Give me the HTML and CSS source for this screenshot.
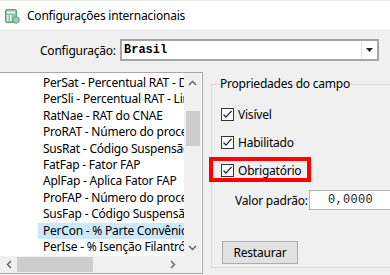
FILE: index.html
```html
<!DOCTYPE html>
<html lang="pt">
<head>
    <meta charset="UTF-8">
    <title>Configurações internacionais</title>
    <link rel="stylesheet" href="styles.css">
</head>
<body>
<div id="window">
    <div id="titlebar">
        <svg class="app-icon" width="15" height="15" viewBox="0 0 15 15">
            <rect x="0.5" y="0.5" width="11" height="13" rx="1.5" fill="#8cc4a8" stroke="#5e9e80"/>
            <rect x="2" y="2.5" width="8" height="2" fill="#e8f4ee"/>
            <rect x="2" y="6" width="1.5" height="6" fill="#e8f4ee"/>
            <rect x="5" y="6" width="1.5" height="6" fill="#e8f4ee"/>
            <circle cx="11" cy="11" r="3.3" fill="#9ccdb4" stroke="#5e9e80"/>
        </svg>
        <span>Configurações internacionais</span>
    </div>

    <div class="config-row">
        <label>Configuração:</label>
        <div class="combo">
            <span class="combo-value">Brasil</span>
            <span class="combo-btn"><svg width="7" height="4" viewBox="0 0 7 4"><path d="M0 0h7L3.5 4z" fill="#222"/></svg></span>
        </div>
    </div>

    <div id="content">
        <div class="listbox">
            <div class="items">
                <div class="item">PerSat - Percentual RAT - Dif</div>
                <div class="item">PerSli - Percentual RAT - Limite</div>
                <div class="item">RatNae - RAT do CNAE</div>
                <div class="item">ProRAT - Número do processo</div>
                <div class="item">SusRat - Código Suspensão</div>
                <div class="item">FatFap - Fator FAP</div>
                <div class="item">AplFap - Aplica Fator FAP</div>
                <div class="item">ProFAP - Número do processo</div>
                <div class="item">SusFap - Código Suspensão</div>
                <div class="item selected">PerCon - % Parte Convênio</div>
                <div class="item">PerIse - % Isenção Filantrópica</div>
            </div>
            <div class="vscroll">
                <svg width="9" height="6" viewBox="0 0 9 6"><path d="M1 5L4.5 1.5L8 5" fill="none" stroke="#606060" stroke-width="1.4"/></svg>
                <div class="vthumb-track"><div class="vthumb"></div></div>
                <svg width="9" height="6" viewBox="0 0 9 6"><path d="M1 1L4.5 4.5L8 1" fill="none" stroke="#606060" stroke-width="1.4"/></svg>
            </div>
            <div class="hscroll">
                <svg width="6" height="9" viewBox="0 0 6 9"><path d="M5 1L1.5 4.5L5 8" fill="none" stroke="#606060" stroke-width="1.4"/></svg>
                <div class="hthumb-track"><div class="hthumb"></div></div>
                <svg width="6" height="9" viewBox="0 0 6 9"><path d="M1 1L4.5 4.5L1 8" fill="none" stroke="#606060" stroke-width="1.4"/></svg>
            </div>
            <div class="corner"></div>
        </div>

        <fieldset class="group">
            <legend>Propriedades do campo</legend>
            <div class="check-row">
                <span class="checkbox"><svg width="11" height="11" viewBox="0 0 11 11"><path d="M1.5 5.5L4 8.2L9.5 2" fill="none" stroke="#222" stroke-width="1.2"/></svg></span>
                <span>Visível</span>
            </div>
            <div class="check-row">
                <span class="checkbox"><svg width="11" height="11" viewBox="0 0 11 11"><path d="M1.5 5.5L4 8.2L9.5 2" fill="none" stroke="#222" stroke-width="1.2"/></svg></span>
                <span>Habilitado</span>
            </div>
            <div class="check-row">
                <span class="checkbox"><svg width="11" height="11" viewBox="0 0 11 11"><path d="M1.5 5.5L4 8.2L9.5 2" fill="none" stroke="#222" stroke-width="1.2"/></svg></span>
                <span>Obrigatório</span>
            </div>
            <div class="value-row">
                <span class="value-label">Valor padrão:</span>
                <div class="edit">0,0000</div>
            </div>
            <button class="btn">Restaurar</button>
            <div class="highlight"></div>
        </fieldset>
    </div>
</div>
</body>
</html>
```

FILE: styles.css
```css
html, body {
    margin: 0;
    padding: 0;
}
body {
    width: 390px;
    height: 275px;
    overflow: hidden;
    background-color: #f0f0f0;
    font-family: "Noto Sans", "Open Sans", sans-serif;
    font-size: 12px;
    letter-spacing: -0.22px;
    color: #000;
}
#window {
    width: 390px;
    height: 275px;
    overflow: hidden;
}
#titlebar {
    height: 29px;
    background-color: #fff;
    display: flex;
    align-items: center;
    padding-left: 5px;
    gap: 7px;
    border-top: 1px solid #e6eedf;
    box-sizing: border-box;
}
#titlebar .app-icon {
    margin-top: 2px;
}
.config-row {
    display: grid;
    grid-template-columns: 80px 259px;
    align-items: center;
    padding-left: 40px;
    margin-top: 10px;
    white-space: nowrap;
}
.combo {
    height: 22px;
    box-sizing: border-box;
    border: 2px solid #a5a5a5;
    background-color: #fff;
    display: flex;
    align-items: center;
}
.combo-value {
    flex: 1;
    padding-left: 2px;
    font-family: "Liberation Mono", monospace;
    font-weight: bold;
    font-size: 12px;
    letter-spacing: 0;
}
.combo-btn {
    width: 15px;
    height: 18px;
    border-left: 1px solid #e3e3e3;
    display: flex;
    align-items: center;
    justify-content: center;
}
#content {
    display: flex;
    margin-top: 11px;
}
.listbox {
    width: 204px;
    height: 202px;
    margin-left: -1px;
    box-sizing: border-box;
    border: 1px solid #a8a8a8;
    background-color: #fff;
    display: grid;
    grid-template-columns: 184px 17px;
    grid-template-rows: 183px 17px;
    flex-shrink: 0;
}
.items {
    padding-top: 2px;
    overflow: hidden;
}
.item {
    height: 16.4px;
    line-height: 16px;
    margin-left: 38px;
    padding-left: 5px;
    white-space: nowrap;
    overflow: hidden;
}
.item.selected {
    background-color: #cce8ff;
}
.vscroll {
    background-color: #f0f0f0;
    display: flex;
    flex-direction: column;
    align-items: center;
    padding: 7px 0 5px;
    box-sizing: border-box;
}
.vthumb-track {
    flex: 1;
    width: 100%;
    padding-top: 25px;
}
.vthumb {
    width: 14px;
    height: 35px;
    margin: 0 auto;
    background-color: #cdcdcd;
}
.hscroll {
    background-color: #f0f0f0;
    display: flex;
    align-items: center;
    padding: 0 8px 0 6px;
}
.hthumb-track {
    flex: 1;
    height: 100%;
    display: flex;
    align-items: center;
    padding-left: 5px;
}
.hthumb {
    width: 76px;
    height: 15px;
    background-color: #cdcdcd;
}
.corner {
    background-color: #f0f0f0;
}
.group {
    position: relative;
    margin: 4px -30px 6px 8px;
    padding: 8px 0 0 9px;
    border: 1px solid #dcdcdc;
    flex: 1;
    min-width: 0;
}
.group legend {
    padding: 0;
    margin-left: -1px;
    line-height: 16px;
}
.check-row {
    height: 28px;
    display: flex;
    align-items: center;
    gap: 4px;
}
.checkbox {
    width: 13px;
    height: 13px;
    box-sizing: border-box;
    border: 1px solid #333;
    background-color: #fff;
    display: flex;
    align-items: center;
    justify-content: center;
}
.value-row {
    display: flex;
    align-items: center;
    margin-top: 6px;
    padding-left: 14px;
    white-space: nowrap;
}
.value-label {
    width: 74px;
    flex: none;
}
.edit {
    width: 120px;
    flex: none;
    height: 20px;
    box-sizing: border-box;
    border: 1px solid #b4b4b4;
    background-color: #fff;
    padding-left: 18px;
    font-family: "Liberation Mono", monospace;
    font-size: 12px;
    letter-spacing: 0.3px;
    line-height: 18px;
    color: #222;
}
.btn {
    display: block;
    margin: 31px 0 0 1px;
    width: 76px;
    height: 23px;
    border: 1px solid #adadad;
    background-color: #e1e1e1;
    font-family: inherit;
    font-size: 12px;
    letter-spacing: -0.22px;
    color: #000;
    padding: 0;
}
.highlight {
    position: absolute;
    left: -3px;
    top: 65px;
    width: 102px;
    height: 25px;
    box-sizing: border-box;
    border: 4px solid #f00;
}
```
